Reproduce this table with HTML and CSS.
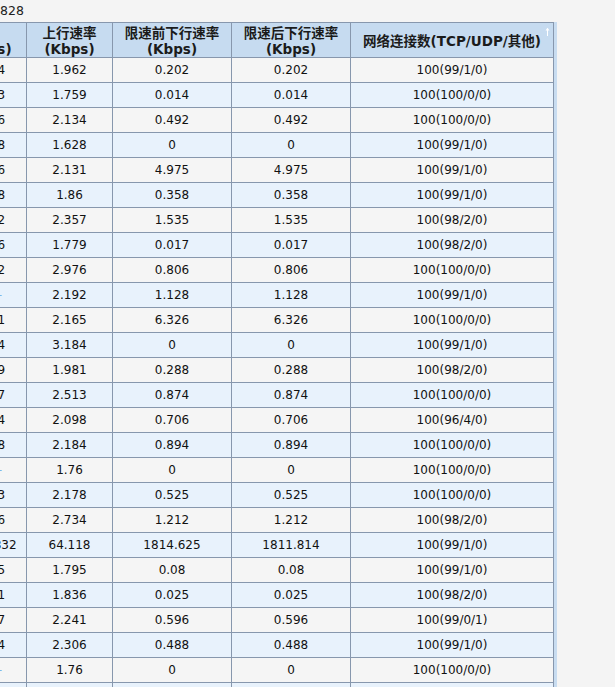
FILE: index.html
```html
<!DOCTYPE html>
<html lang="zh-CN">
<head>
<meta charset="utf-8">
<title>流量统计</title>
<link rel="stylesheet" href="styles.css">
</head>
<body>
<div class="viewport">
  <div class="caption">828</div>
  <div class="sheet">
    <table class="grid">
      <colgroup>
        <col class="c1"><col class="c2"><col class="c3"><col class="c4"><col class="c5">
      </colgroup>
      <thead>
        <tr>
          <th class="first">下行<br>(Kbps)</th>
          <th>上行速率<br>(Kbps)</th>
          <th>限速前下行速率<br>(Kbps)</th>
          <th>限速后下行速率<br>(Kbps)</th>
          <th class="sorted">网络连接数(TCP/UDP/其他)<svg class="arrow" width="5" height="9" viewBox="0 0 5 9"><path d="M2.5 1.5V9" stroke="#fff" stroke-width="1"/><path d="M0.5 3.5L2.5 0.8L4.5 3.5Z" fill="#fff"/></svg></th>
        </tr>
      </thead>
      <tbody>
        <tr><td>1.954</td><td>1.962</td><td>0.202</td><td>0.202</td><td>100(99/1/0)</td></tr>
        <tr><td>2.103</td><td>1.759</td><td>0.014</td><td>0.014</td><td>100(100/0/0)</td></tr>
        <tr><td>1.836</td><td>2.134</td><td>0.492</td><td>0.492</td><td>100(100/0/0)</td></tr>
        <tr><td>1.588</td><td>1.628</td><td>0</td><td>0</td><td>100(99/1/0)</td></tr>
        <tr><td>2.126</td><td>2.131</td><td>4.975</td><td>4.975</td><td>100(99/1/0)</td></tr>
        <tr><td>1.818</td><td>1.86</td><td>0.358</td><td>0.358</td><td>100(99/1/0)</td></tr>
        <tr><td>2.272</td><td>2.357</td><td>1.535</td><td>1.535</td><td>100(98/2/0)</td></tr>
        <tr><td>1.726</td><td>1.779</td><td>0.017</td><td>0.017</td><td>100(98/2/0)</td></tr>
        <tr><td>2.892</td><td>2.976</td><td>0.806</td><td>0.806</td><td>100(100/0/0)</td></tr>
        <tr><td><span class="dash">-</span></td><td>2.192</td><td>1.128</td><td>1.128</td><td>100(99/1/0)</td></tr>
        <tr><td>2.041</td><td>2.165</td><td>6.326</td><td>6.326</td><td>100(100/0/0)</td></tr>
        <tr><td>3.114</td><td>3.184</td><td>0</td><td>0</td><td>100(99/1/0)</td></tr>
        <tr><td>1.909</td><td>1.981</td><td>0.288</td><td>0.288</td><td>100(98/2/0)</td></tr>
        <tr><td>2.437</td><td>2.513</td><td>0.874</td><td>0.874</td><td>100(100/0/0)</td></tr>
        <tr><td>2.024</td><td>2.098</td><td>0.706</td><td>0.706</td><td>100(96/4/0)</td></tr>
        <tr><td>2.118</td><td>2.184</td><td>0.894</td><td>0.894</td><td>100(100/0/0)</td></tr>
        <tr><td><span class="dash">-</span></td><td>1.76</td><td>0</td><td>0</td><td>100(100/0/0)</td></tr>
        <tr><td>2.113</td><td>2.178</td><td>0.525</td><td>0.525</td><td>100(100/0/0)</td></tr>
        <tr><td>2.646</td><td>2.734</td><td>1.212</td><td>1.212</td><td>100(98/2/0)</td></tr>
        <tr><td>1811.832</td><td>64.118</td><td>1814.625</td><td>1811.814</td><td>100(99/1/0)</td></tr>
        <tr><td>1.745</td><td>1.795</td><td>0.08</td><td>0.08</td><td>100(99/1/0)</td></tr>
        <tr><td>1.781</td><td>1.836</td><td>0.025</td><td>0.025</td><td>100(98/2/0)</td></tr>
        <tr><td>2.187</td><td>2.241</td><td>0.596</td><td>0.596</td><td>100(99/0/1)</td></tr>
        <tr><td>2.254</td><td>2.306</td><td>0.488</td><td>0.488</td><td>100(99/1/0)</td></tr>
        <tr><td><span class="dash">-</span></td><td>1.76</td><td>0</td><td>0</td><td>100(100/0/0)</td></tr>
        <tr><td>1.792</td><td>1.803</td><td>0.031</td><td>0.031</td><td>100(99/1/0)</td></tr>
      </tbody>
    </table>
  </div>
</div>
</body>
</html>
```
FILE: styles.css
```css
html, body {
  margin: 0;
  padding: 0;
  overflow: hidden;
  background: #f4f4f4;
}

.viewport {
  width: 615px;
  height: 687px;
  overflow: hidden;
  font-family: "DejaVu Sans", "Noto Sans CJK SC", sans-serif;
  font-size: 12px;
  color: #111;
}

.caption {
  height: 22px;
  line-height: 22px;
  font-size: 12.5px;
  color: #222;
}

.sheet {
  margin-left: -51px;
}

.grid {
  border-collapse: collapse;
  table-layout: fixed;
  width: 604px;
  box-shadow: 3px 0 0 #c8dcf0;
}

.c1 { width: 77px; }
.c2 { width: 86px; }
.c3 { width: 119px; }
.c4 { width: 119px; }
.c5 { width: 203px; }

.grid th,
.grid td {
  border: 1px solid #8797ad;
  text-align: center;
  padding: 0;
  white-space: nowrap;
}

.grid th {
  height: 34px;
  box-sizing: border-box;
  padding-top: 2px;
  background: #c6dbf0;
  font-family: "DejaVu Sans", "Noto Sans CJK SC", sans-serif;
  font-weight: bold;
  font-size: 13.5px;
  line-height: 16px;
  color: #1b1b1b;
}

.grid th.first {
  padding-right: 3px;
}

.grid th.sorted {
  position: relative;
}

.arrow {
  position: absolute;
  right: 3px;
  top: 4px;
}

.grid td {
  height: 24px;
  line-height: 24px;
}

.grid tbody tr:nth-child(odd) td {
  background: #f5f5f5;
}

.grid tbody tr:nth-child(even) td {
  background: #e8f2fc;
}

.dash {
  display: inline-block;
  margin-left: 24px;
  color: #7fb6e8;
}
```
